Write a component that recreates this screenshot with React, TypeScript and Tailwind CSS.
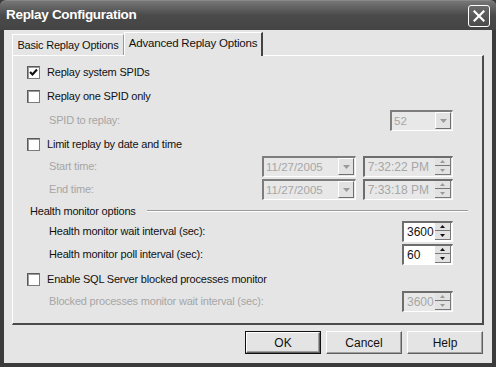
import React from "react";

const F = { fontFamily: '"Liberation Sans", Arial, sans-serif' };

const T = "text-[11px] tracking-[-0.2px] whitespace-nowrap";

function Check({ checked, label }: { checked?: boolean; label: string }) {
  return (
    <div className="flex items-center h-[22px]">
      <div className="w-[13px] h-[13px] bg-white border border-[#7a7a7a] border-t-[#5a5a5a] border-l-[#5a5a5a] flex items-center justify-center shadow-[inset_1px_1px_0_#9a9a9a]">
        {checked && (
          <svg width="9" height="9" viewBox="0 0 9 9">
            <path d="M1 4 L3.5 6.5 L8 1.5" stroke="#111" strokeWidth="2.2" fill="none" />
          </svg>
        )}
      </div>
      <span className={`ml-[7px] ${T} text-[#111]`}>{label}</span>
    </div>
  );
}

function Arrow({ disabled }: { disabled?: boolean }) {
  return (
    <svg width="7" height="4" viewBox="0 0 7 4">
      <path d="M0 0 H7 L3.5 4 Z" fill={disabled ? "#9a9a9a" : "#222"} />
    </svg>
  );
}

function Combo({ w, value }: { w: string; value: string }) {
  return (
    <div className={`${w} h-[21px] flex bg-[#e8e8e8] border-t-2 border-l-2 border-t-[#7d7d7d] border-l-[#7d7d7d] border-b border-r border-b-white border-r-white`}>
      <span className="flex-1 pl-[2px] text-[11.5px] leading-[18px] text-[#a6a6a6]">{value}</span>
      <div className="w-[16px] h-[17px] mt-[0.5px] mr-[1px] bg-[#e2e2e2] border border-t-white border-l-white border-b-[#6e6e6e] border-r-[#6e6e6e] flex items-center justify-center">
        <Arrow disabled />
      </div>
    </div>
  );
}

function SpinBtns({ disabled }: { disabled?: boolean }) {
  const c = disabled ? "#9a9a9a" : "#111";
  return (
    <div className="w-[16px] flex flex-col h-[17px] mr-[1px]">
      <div className="h-[8px] bg-[#e2e2e2] border-b border-r border-b-[#777] border-r-[#777] flex items-center justify-center">
        <svg width="5" height="3" viewBox="0 0 5 3"><path d="M0 3 H5 L2.5 0 Z" fill={c} /></svg>
      </div>
      <div className="h-[9px] bg-[#e2e2e2] border-b border-r border-b-[#777] border-r-[#777] flex items-center justify-center">
        <svg width="5" height="3" viewBox="0 0 5 3"><path d="M0 0 H5 L2.5 3 Z" fill={c} /></svg>
      </div>
    </div>
  );
}

function Spin({ w, value, disabled, right }: { w: string; value: string; disabled?: boolean; right?: boolean }) {
  return (
    <div className={`${w} h-[21px] flex items-center ${disabled ? "bg-[#e8e8e8]" : "bg-white"} border-t-2 border-l-2 border-t-[#6d6d6d] border-l-[#6d6d6d] border-b border-r border-b-white border-r-white`}>
      <span className={`flex-1 ${right ? "text-right pr-[6px]" : "pl-[3px]"} text-[12px] leading-[18px] ${disabled ? "text-[#a6a6a6]" : "text-[#111]"}`}>{value}</span>
      <SpinBtns disabled={disabled} />
    </div>
  );
}

function Button({ label, def }: { label: string; def?: boolean }) {
  return (
    <div className={`w-[76px] h-[23px] flex items-center justify-center text-[12px] text-[#111] bg-[#e4e4e4] ${def ? "border border-[#111]" : ""}`}>
      <div className="w-full h-full flex items-center justify-center border border-t-white border-l-white border-b-[#5f5f5f] border-r-[#5f5f5f] shadow-[inset_-1px_-1px_0_#a0a0a0]">
        {label}
      </div>
    </div>
  );
}

export default function App() {
  return (
    <div style={F} className="w-[496px] h-[367px] bg-[#3b3b3b] flex flex-col overflow-hidden">
      {/* title bar */}
      <div className="h-[30px] flex items-center justify-between pl-[6px] pr-[6px] bg-gradient-to-b from-[#777] via-[#4a4a4a] to-[#444] border-t border-[#888] rounded-t-[6px]">
        <span className="text-white font-bold text-[13.5px] tracking-[-0.3px]">Replay Configuration</span>
        <div className="w-[22px] h-[22px] rounded-[3px] border border-white bg-gradient-to-b from-[#6a6a6a] to-[#4a4a4a] flex items-center justify-center">
          <svg width="12" height="12" viewBox="0 0 12 12">
            <path d="M1.5 1.5 L10.5 10.5 M10.5 1.5 L1.5 10.5" stroke="white" strokeWidth="2.2" strokeLinecap="square" />
          </svg>
        </div>
      </div>
      {/* body */}
      <div className="flex-1 mx-[4px] mb-[4px] bg-[#e5e5e5] flex flex-col px-[8px]">
        {/* tabs */}
        <div className="flex items-end h-[24px] mt-[1px]">
          <div className={`h-[21px] w-[112px] flex items-center justify-center ${T} text-[#111] border-t border-l border-white border-r border-r-[#9a9a9a]`}>
            Basic Replay Options
          </div>
          <div className={`h-[24px] w-[139px] -mb-[1px] relative z-10 bg-[#e5e5e5] flex items-center justify-center text-[11.5px] tracking-[-0.2px] whitespace-nowrap text-[#111] border-t border-l border-white border-r-2 border-r-[#444] pb-[2px]`}>
            Advanced Replay Options
          </div>
        </div>
        {/* panel */}
        <div className="h-[270px] border-t border-l border-white border-r-2 border-b-2 border-r-[#4a4a4a] border-b-[#4a4a4a] flex flex-col pl-[14px] pr-[29px] pt-[5px]">
          <Check checked label="Replay system SPIDs" />
          <div className="mt-[2px]"><Check label="Replay one SPID only" /></div>
          <div className="h-[22px] mt-[2px] flex items-center justify-between">
            <span className={`ml-[22px] ${T} text-[#a6a6a6]`}>SPID to replay:</span>
            <Combo w="w-[63px]" value="52" />
          </div>
          <div className="mt-[2px]"><Check label="Limit replay by date and time" /></div>
          <div className="h-[22px] flex items-center justify-between">
            <span className={`ml-[22px] ${T} text-[#a6a6a6]`}>Start time:</span>
            <div className="flex gap-[7px]">
              <Combo w="w-[94px]" value="11/27/2005" />
              <Spin w="w-[90px]" value="7:32:22 PM" disabled right />
            </div>
          </div>
          <div className="h-[22px] mt-[1px] flex items-center justify-between">
            <span className={`ml-[22px] ${T} text-[#a6a6a6]`}>End time:</span>
            <div className="flex gap-[7px]">
              <Combo w="w-[94px]" value="11/27/2005" />
              <Spin w="w-[90px]" value="7:33:18 PM" disabled right />
            </div>
          </div>
          <div className="h-[18px] mt-[2px] flex items-center -mr-[15px]">
            <span className={`ml-[3px] ${T} text-[#111]`}>Health monitor options</span>
            <div className="flex-1 ml-[11px] h-[2px] border-t border-[#9a9a9a] border-b border-b-white" />
          </div>
          <div className="h-[22px] flex items-center justify-between">
            <span className={`ml-[22px] ${T} text-[#111]`}>Health monitor wait interval (sec):</span>
            <Spin w="w-[51px]" value="3600" />
          </div>
          <div className="h-[22px] mt-[1px] flex items-center justify-between">
            <span className={`ml-[22px] ${T} text-[#111]`}>Health monitor poll interval (sec):</span>
            <Spin w="w-[51px]" value="60" />
          </div>
          <div className="mt-[3px]"><Check label="Enable SQL Server blocked processes monitor" /></div>
          <div className="h-[22px] flex items-center justify-between">
            <span className={`ml-[22px] ${T} text-[#a6a6a6]`}>Blocked processes monitor wait interval (sec):</span>
            <Spin w="w-[51px]" value="3600" disabled />
          </div>
        </div>
        {/* buttons */}
        <div className="flex justify-end gap-[5px] mt-[6px] mr-[1px]">
          <Button label="OK" def />
          <Button label="Cancel" />
          <Button label="Help" />
        </div>
      </div>
    </div>
  );
}
